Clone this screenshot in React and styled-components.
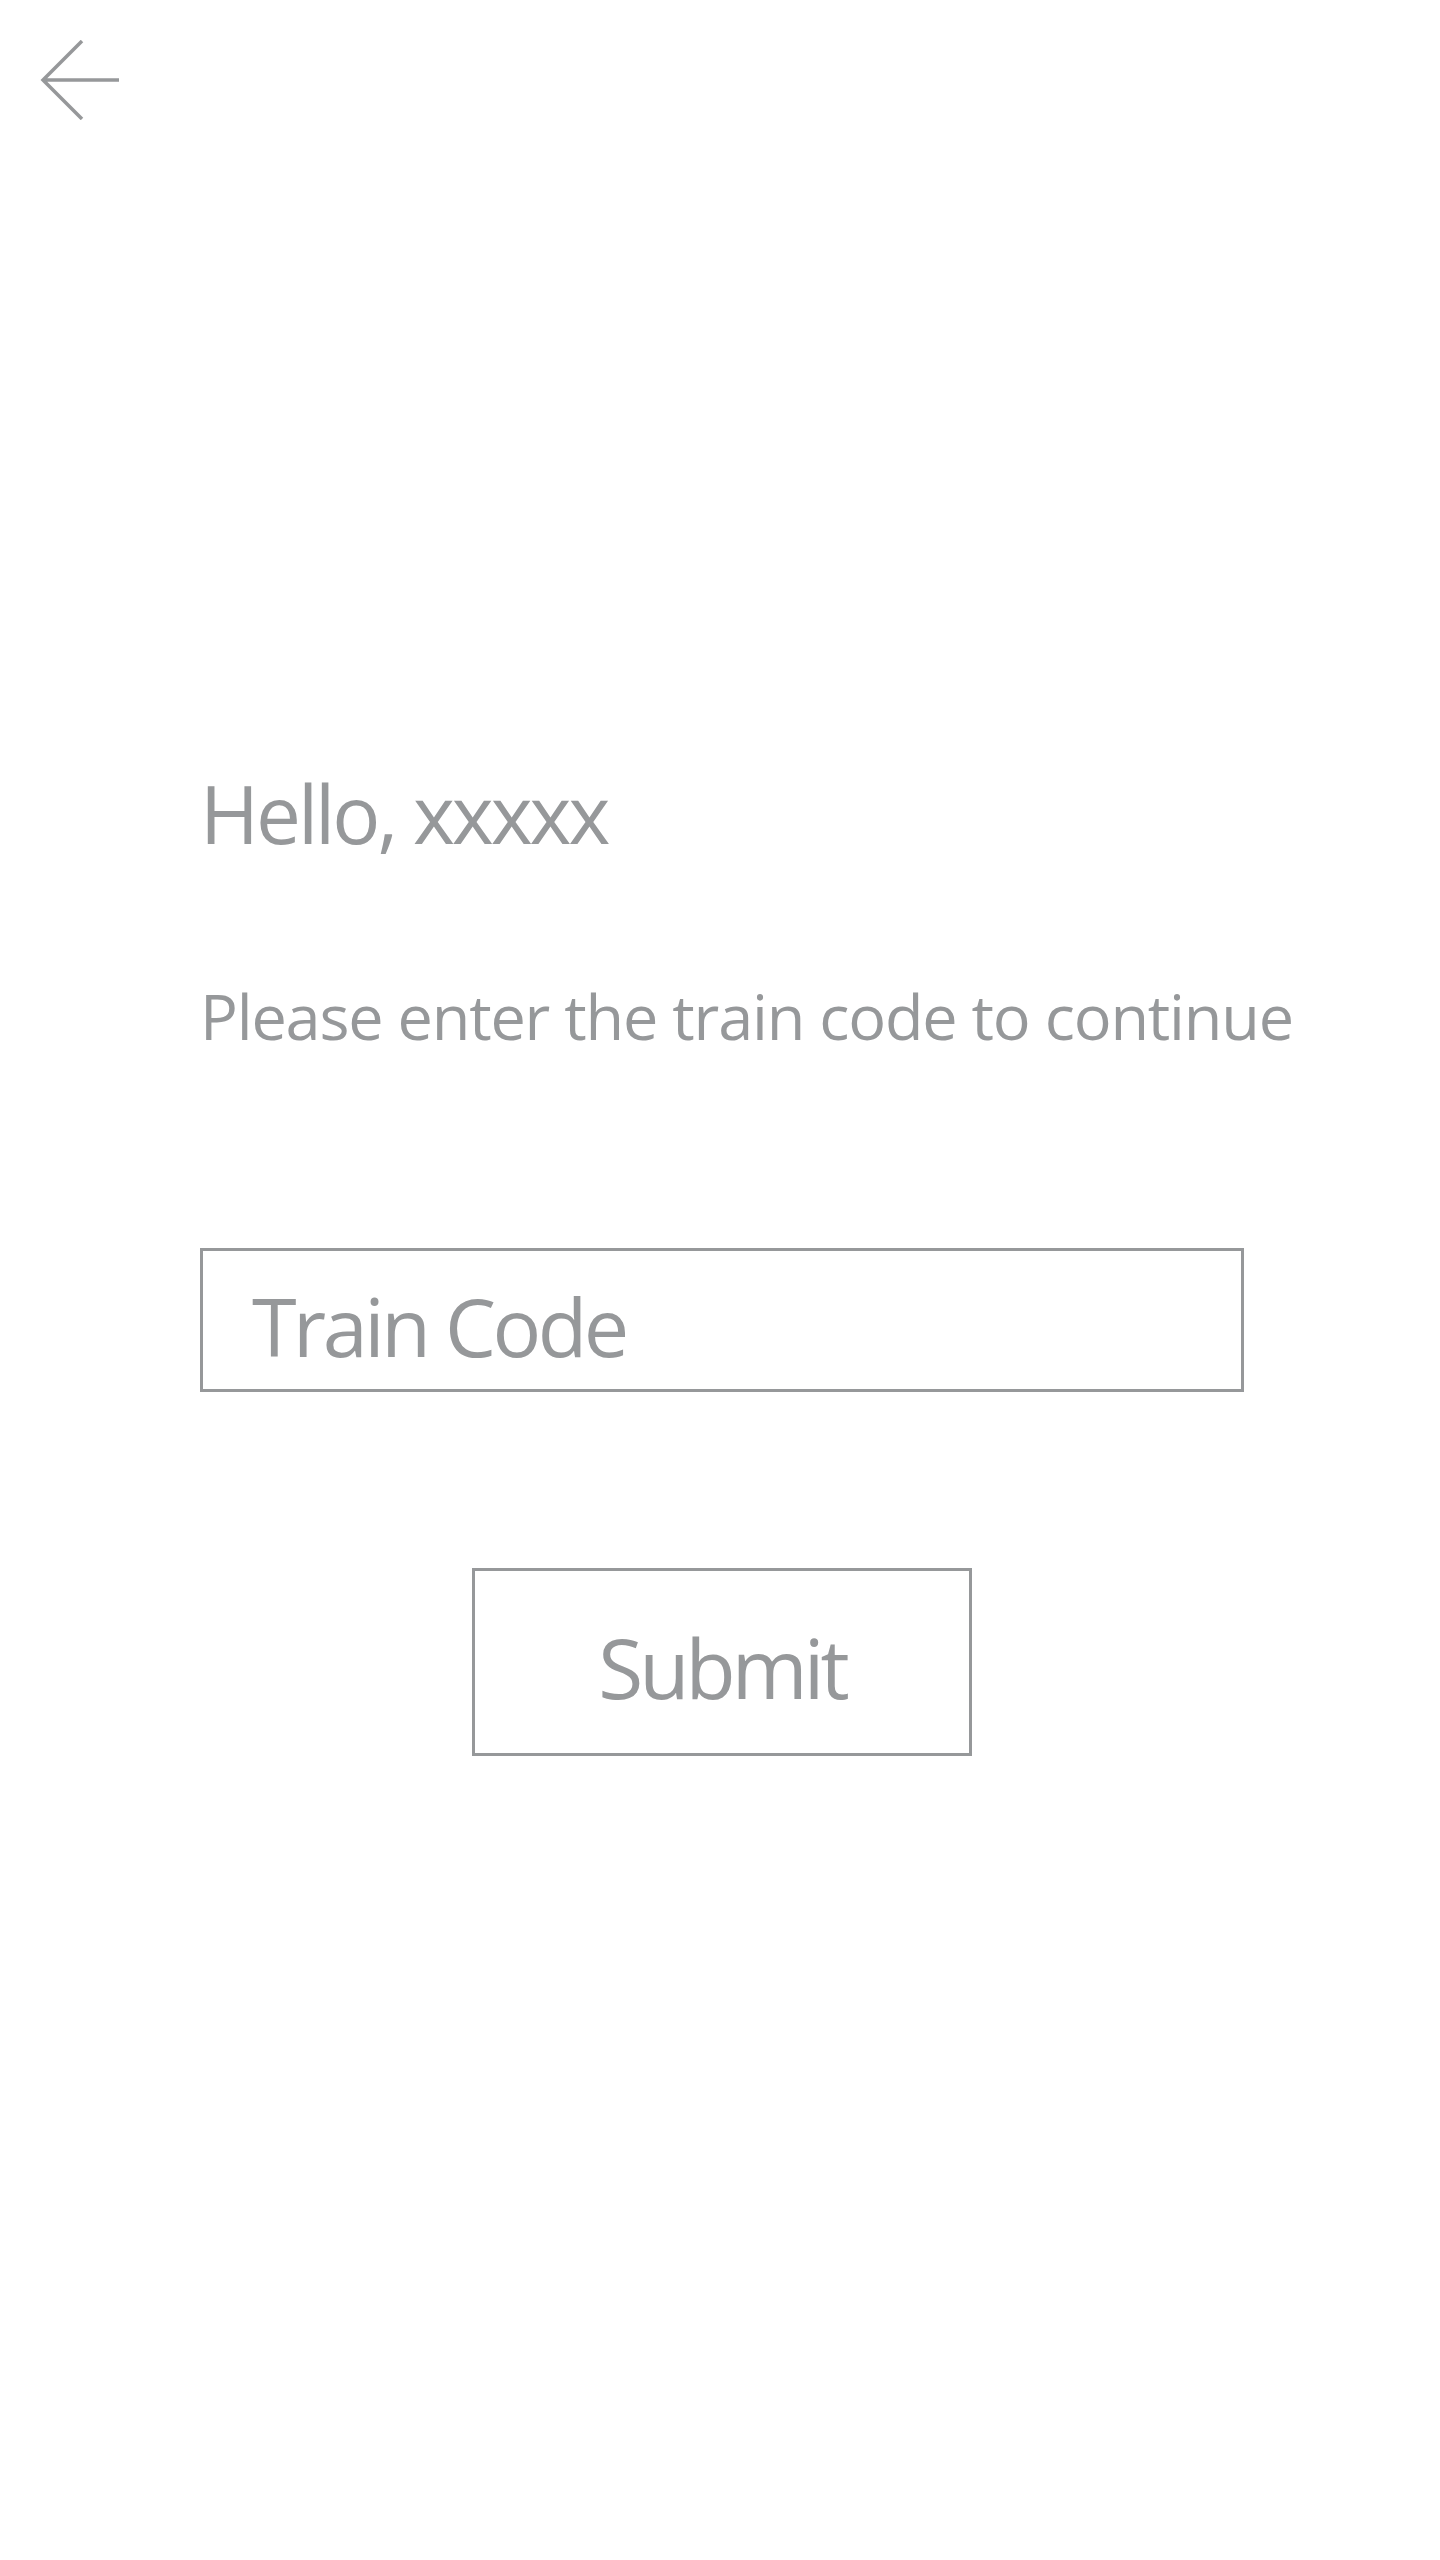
import React from 'react'
import styled, { createGlobalStyle } from 'styled-components'

const grey = '#96989a'

const GlobalStyle = createGlobalStyle`
  html, body {
    margin: 0;
    padding: 0;
    background: #ffffff;
  }
  body {
    font-family: "Open Sans", "Noto Sans", sans-serif;
    color: ${grey};
  }
`

const Page = styled.div`
  width: 1440px;
  min-height: 2560px;
  background: #ffffff;
`

const Header = styled.header`
  height: 160px;
  display: flex;
  align-items: flex-start;
`

const BackButton = styled.button`
  margin: 40px 0 0 40px;
  padding: 0;
  width: 80px;
  height: 80px;
  border: none;
  background: transparent;
  cursor: pointer;
  display: flex;
`

const Main = styled.main`
  margin-left: 200px;
  width: 1044px;
  padding-top: 613px;
  display: flex;
  flex-direction: column;
`

const Greeting = styled.h1`
  margin: 0;
  font-size: 80px;
  line-height: 80px;
  font-weight: 400;
  letter-spacing: -3px;
`

const Hint = styled.p`
  margin: 131px 0 0;
  font-size: 63px;
  line-height: 63px;
  font-weight: 400;
  letter-spacing: -1.2px;
  white-space: nowrap;
`

const CodeInput = styled.input`
  box-sizing: border-box;
  margin-top: 201px;
  width: 1044px;
  height: 144px;
  padding: 10px 20px 0 49px;
  border: 3px solid ${grey};
  border-radius: 0;
  outline: none;
  background: #ffffff;
  font-family: "Open Sans", "Noto Sans", sans-serif;
  font-size: 81px;
  line-height: 81px;
  letter-spacing: -3.5px;
  color: ${grey};

  &::placeholder {
    color: ${grey};
    opacity: 1;
  }
`

const SubmitButton = styled.button`
  box-sizing: border-box;
  align-self: center;
  margin-top: 176px;
  width: 500px;
  height: 188px;
  padding: 10px 0 0;
  border: 3px solid ${grey};
  border-radius: 0;
  background: #ffffff;
  font-family: "Open Sans", "Noto Sans", sans-serif;
  font-size: 82px;
  line-height: 82px;
  letter-spacing: -4px;
  color: ${grey};
  cursor: pointer;
`

const ArrowLeft = () => (
  <svg width="80" height="80" viewBox="40 40 80 80" fill="none">
    <path
      d="M82 41 L43 80 L82 119 M43 80 L119 80"
      stroke={grey}
      strokeWidth="3.5"
    />
  </svg>
)

export default function App() {
  return (
    <Page>
      <GlobalStyle />
      <Header>
        <BackButton aria-label="Back">
          <ArrowLeft />
        </BackButton>
      </Header>
      <Main>
        <Greeting>Hello, xxxxx</Greeting>
        <Hint>Please enter the train code to continue</Hint>
        <CodeInput placeholder="Train Code" />
        <SubmitButton>Submit</SubmitButton>
      </Main>
    </Page>
  )
}
